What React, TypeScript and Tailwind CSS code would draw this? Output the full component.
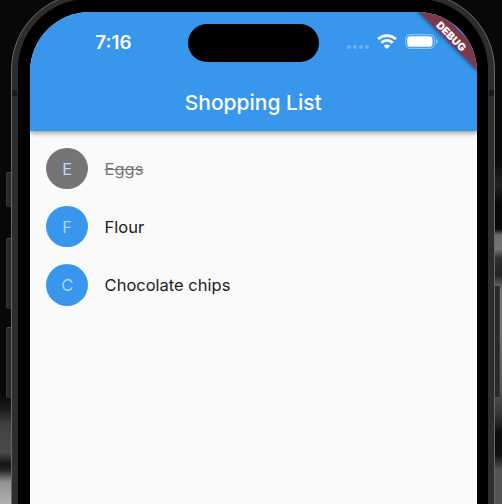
const items = [
  { name: "Eggs", done: true },
  { name: "Flour", done: false },
  { name: "Chocolate chips", done: false },
];

function Wifi() {
  return (
    <svg className="h-[16px] w-[20px] shrink-0" viewBox="0 0 20 16" fill="none" stroke="white" strokeWidth="2.7">
      <path d="M1.1 5.1C6.1 .5 13.9 .5 18.9 5.1" />
      <path d="M4.3 8.7C7.5 5.7 12.5 5.7 15.7 8.7" />
      <path d="M10 14.9 6.8 11.8C8.6 10.2 11.4 10.2 13.2 11.8Z" fill="white" stroke="none" />
    </svg>
  );
}

function Battery() {
  return (
    <svg className="h-[15px] w-[33px] shrink-0" viewBox="0 0 33 15">
      <rect x=".6" y=".6" width="28.8" height="13.8" rx="4.4" fill="none" stroke="white" strokeOpacity=".4" strokeWidth="1.1" />
      <rect x="2.2" y="2.2" width="25.3" height="10.6" rx="3.1" fill="white" />
      <path d="M31 5.1C32.8 5.9 32.8 9.1 31 9.9Z" fill="white" fillOpacity=".5" />
    </svg>
  );
}

function Backdrop() {
  return (
    <div className="absolute inset-0 flex justify-between">
      <div className="h-full w-[20px] bg-[linear-gradient(180deg,#080808_0px,#090909_395px,#1c1c1c_410px,#424242_425px,#4a4a4a_452px,#151515_464px,#222_470px,#929292_482px,#b0b0b0_504px)]" />
      <div className="h-full w-[20px] bg-[linear-gradient(180deg,#080808_0px,#080808_160px,#202020_185px,#070707_205px,#080808_229px,#6b6b6b_235px,#777_249px,#303030_258px,#222_275px,#777_290px,#777_330px,#555_390px,#333_416px,#0c0c0c_433px,#111_455px,#555_470px,#555_504px)]" />
    </div>
  );
}

function SideButtons() {
  return (
    <>
      <div className="absolute left-[6px] top-[172px] h-[35px] w-[8px] rounded-l-[2px] border border-b-[#292929] border-l-[#383838] border-t-[#484848] bg-[#292929]" />
      <div className="absolute left-[6px] top-[238px] h-[71px] w-[8px] rounded-l-[2px] border border-b-[#292929] border-l-[#383838] border-t-[#484848] bg-[#292929]" />
      <div className="absolute left-[6px] top-[327px] h-[71px] w-[8px] rounded-l-[2px] border border-b-[#292929] border-l-[#383838] border-t-[#484848] bg-[#292929]" />
      <div className="absolute left-[492px] top-[285px] h-[112px] w-[8px] rounded-r-[2px] border border-b-[#292929] border-r-[#383838] border-t-[#606060] bg-[#292929]" />
    </>
  );
}

function DebugBanner() {
  return (
    <svg className="absolute right-0 top-0 h-[80px] w-[80px]" viewBox="-10 0 80 80">
      <defs>
        <filter id="bannerShadow" x="-20%" y="-20%" width="140%" height="140%">
          <feDropShadow dx="0" dy="0" stdDeviation="2.6" floodColor="#000" floodOpacity=".7" />
        </filter>
      </defs>
      <path d="M10-1 33-23 93 37 71 60Z" fill="#7c374b" filter="url(#bannerShadow)" transform="translate(0 -1)" />
      <path d="M32-2H72V39Z" fill="#3897ed" />
      <text x="44" y="28" transform="rotate(45 44 24.5)" textAnchor="middle" textLength="37" lengthAdjust="spacingAndGlyphs" className="fill-white font-['Inter',sans-serif] text-[10.5px] font-black">DEBUG</text>
    </svg>
  );
}

export default function App() {
  return (
    <main className="relative h-[504px] w-[502px] overflow-hidden bg-[#080808] font-['Inter',sans-serif]">
      <Backdrop />
      <SideButtons />
      <div className="relative -mt-[7px] ml-[11px] h-[620px] w-[484px] rounded-[77px] border border-[#686868] bg-[#2d2d2d] px-[6px] pt-[5px]">
        <div className="h-[610px] rounded-[70px] bg-black px-[12px] pt-[13px]">
          <div className="relative h-[590px] w-[447px] overflow-hidden rounded-[60px] bg-[#fafafa]">
            <header className="relative h-[119px] bg-[#3897ed] text-white shadow-[0_2px_5px_rgba(0,0,0,0.4)]">
              <div className="flex h-[61px] items-center">
                <svg className="ml-[65px] h-[24px] w-[40px] shrink-0 overflow-visible">
                  <text x="0.3" y="18" textLength="36.2" lengthAdjust="spacingAndGlyphs" className="fill-white text-[18px] font-semibold">7:16</text>
                </svg>
                <div className="ml-[53px] h-[38px] w-[131px] shrink-0 rounded-full bg-black" />
                <div className="ml-[27.5px] mt-[8px] flex w-[23px] shrink-0 justify-between">
                  {[0, 1, 2, 3].map((dot) => (
                    <span key={dot} className="h-[4px] w-[4px] rounded-full bg-white/25" />
                  ))}
                </div>
                <div className="ml-[7.5px] -mt-[1px]"><Wifi /></div>
                <div className="ml-[8px] -mt-[2px]"><Battery /></div>
              </div>
              <svg className="mx-auto block h-[58px] w-[138px] overflow-visible">
                <text x="-0.3" y="36.6" textLength="137" lengthAdjust="spacingAndGlyphs" className="fill-white text-[20.5px] font-medium">Shopping List</text>
              </svg>
              <DebugBanner />
            </header>
            <ul className="pt-[8.4px]">
              {items.map((item) => (
                <li key={item.name} className="flex h-[58.2px] items-center gap-[16.6px] pl-[16.4px]">
                  <span className={item.done ? "flex h-[41.6px] w-[41.6px] items-center justify-center rounded-full bg-[#757575] pt-px text-[16.5px] text-[#bbdefb]" : "flex h-[41.6px] w-[41.6px] items-center justify-center rounded-full bg-[#3897ed] pt-px text-[16.5px] text-[#a9d5fb]"}>
                    {item.name[0]}
                  </span>
                  <span className={item.done ? "pt-px text-[16.5px] text-[#777] line-through decoration-1" : "pt-px text-[16.5px] text-[#212121]"}>
                    {item.name}
                  </span>
                </li>
              ))}
            </ul>
          </div>
        </div>
      </div>
      <div className="absolute left-[12px] top-[90px] h-[6px] w-[5px] bg-[#191919]" />
      <div className="absolute left-[489px] top-[90px] h-[6px] w-[5px] bg-[#191919]" />
    </main>
  );
}
